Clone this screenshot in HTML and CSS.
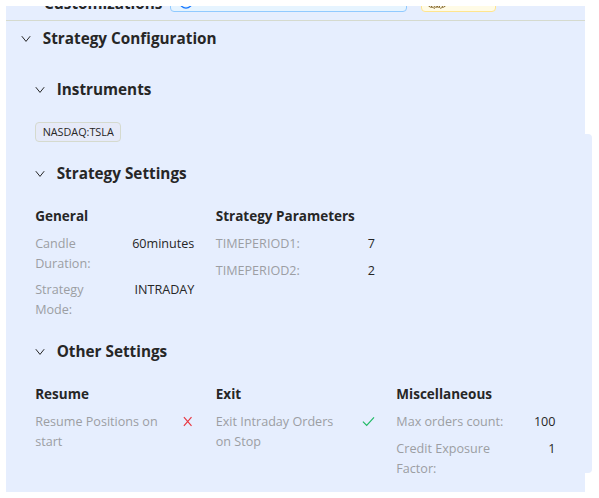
FILE: index.html
```html
<!DOCTYPE html>
<html lang="en">
<head>
<meta charset="utf-8">
<title>Strategy Configuration</title>
<link rel="stylesheet" href="styles.css">
</head>
<body>
<svg class="defs" width="0" height="0"><defs>
<symbol id="chevron" viewBox="0 0 10 10"><path d="M.8 2.2 5 7.4 9.2 2.2"/></symbol>
</defs></svg>
<div class="layout">
<main class="panel">
  <header class="customizations">
    <h2>Customizations</h2>
    <div class="box info"><svg viewBox="0 0 14 14"><circle cx="7" cy="7" r="6.1"/></svg></div>
    <div class="box warn"><svg viewBox="0 0 18 14"><path d="M.5 11 2.5 12.2H5L6 13.5 7.5 12.2H8.8L9.8 11M3.5 9v3M6.3 9v3M8.2 11 9.8 12.2H11.5L12.8 13.5 14 12.2H15.5L17.5 11M11.5 9v3M14.3 9v3"/></svg></div>
  </header>
  <h2 class="heading main"><svg class="chevron"><use href="#chevron"/></svg><span>Strategy Configuration</span></h2>
  <div class="body">
    <h3 class="heading instruments"><svg class="chevron"><use href="#chevron"/></svg><span>Instruments</span></h3>
    <span class="tag">NASDAQ:TSLA</span>
    <h3 class="heading settings"><svg class="chevron"><use href="#chevron"/></svg><span>Strategy Settings</span></h3>
    <div class="columns general">
      <section><h4>General</h4>
        <div class="item"><span class="label narrow">Candle Duration:</span><span>60minutes</span></div>
        <div class="item"><span class="label narrow">Strategy Mode:</span><span>INTRADAY</span></div>
      </section>
      <section><h4>Strategy Parameters</h4>
        <div class="item"><span class="label">TIMEPERIOD1:</span><span>7</span></div>
        <div class="item"><span class="label">TIMEPERIOD2:</span><span>2</span></div>
      </section>
    </div>
    <h3 class="heading other"><svg class="chevron"><use href="#chevron"/></svg><span>Other Settings</span></h3>
    <div class="columns">
      <section><h4>Resume</h4>
        <div class="item"><span class="label">Resume Positions on start</span><svg class="mark no" viewBox="0 0 13 13"><path d="M2.9 1.2 10.5 9.8M10.5 1.2 2.9 9.8"/></svg></div>
      </section>
      <section><h4>Exit</h4>
        <div class="item"><span class="label">Exit Intraday Orders on Stop</span><svg class="mark yes" viewBox="0 0 13 13"><path d="M.9 5.6 4.7 9.4 12 1.4"/></svg></div>
      </section>
      <section><h4>Miscellaneous</h4>
        <div class="item"><span class="label">Max orders count:</span><span>100</span></div>
        <div class="item"><span class="label">Credit Exposure Factor:</span><span>1</span></div>
      </section>
    </div>
  </div>
</main>
<div class="scrollbar"></div>
</div>
</body>
</html>
```
FILE: styles.css
```css
* { box-sizing: border-box; }
body { margin: 0; background: #fff; color: #262626; font: 12.6px/19.8px "Open Sans", sans-serif; }
h2, h3, h4 { margin: 0; font-weight: 700; }
.defs { display: block; height: 0; }
.layout { display: flex; padding: 6px 0 0 6px; }
.panel { width: 579px; height: 486px; background: #e6eefe; overflow: hidden; }
.customizations { height: 15px; display: flex; align-items: flex-end; padding: 0 0 8px 38px; border-bottom: 1px solid #d5dace; overflow: hidden; }
.customizations h2 { width: 126px; font-size: 15.3px; line-height: 24px; margin-bottom: -3px; flex: none; }
.box { height: 24px; flex: none; border: 1px solid; border-radius: 4px; }
.info { width: 237px; background: #e6f4ff; border-color: #91caff; padding: 5px 0 0 8px; }
.info svg { display: block; width: 14px; height: 14px; fill: none; stroke: #1677ff; stroke-width: 1.3; margin-top: 1px; }
.warn { width: 75px; margin-left: 14px; background: #fffbe6; border-color: #ffe58f; padding: 6px 0 0 6px; }
.warn svg { display: block; width: 18px; height: 14px; fill: none; stroke: #785819; stroke-width: .9; }
.heading { display: flex; align-items: center; font-size: 15.3px; line-height: 24px; height: 24px; }
.chevron { width: 10px; height: 10px; margin-right: 11.5px; margin-top: 2px; fill: none; stroke: #262626; stroke-width: 1; }
.main { margin: 5px 0 0 15.3px; }
.body { padding-left: 29.2px; }
.instruments { margin-top: 27px; }
.settings { margin-top: 19px; }
.settings .chevron { margin-top: 1px; }
.other { margin-top: 20px; }
.tag { display: block; width: 86px; height: 20px; margin-top: 21px; border: 1px solid #d5dace; border-radius: 4px; background: #e6eaf8; font-size: 10.8px; line-height: 18px; text-align: center; }
.columns { display: grid; grid-template-columns: repeat(3, 159.2px); gap: 21.4px; margin-top: 22px; }
.general { height: 112px; }
h4 { font-size: 13.5px; line-height: 18px; height: 20px; margin-bottom: 7px; }
.item { display: flex; justify-content: space-between; margin-bottom: 7px; }
.general .item { line-height: 19.5px; }
.label { color: #9c9ea3; max-width: 128px; }
.narrow { width: 75px; }
.mark { width: 13px; height: 13px; margin-top: 4px; fill: none; flex: none; stroke-width: 1.2; }
.no { stroke: #e83842; }
.yes { stroke: #20ba65; }
.scrollbar { width: 7px; height: 339px; margin-top: 128px; background: #e6eefe; border-radius: 0 4px 4px 0; }
```
